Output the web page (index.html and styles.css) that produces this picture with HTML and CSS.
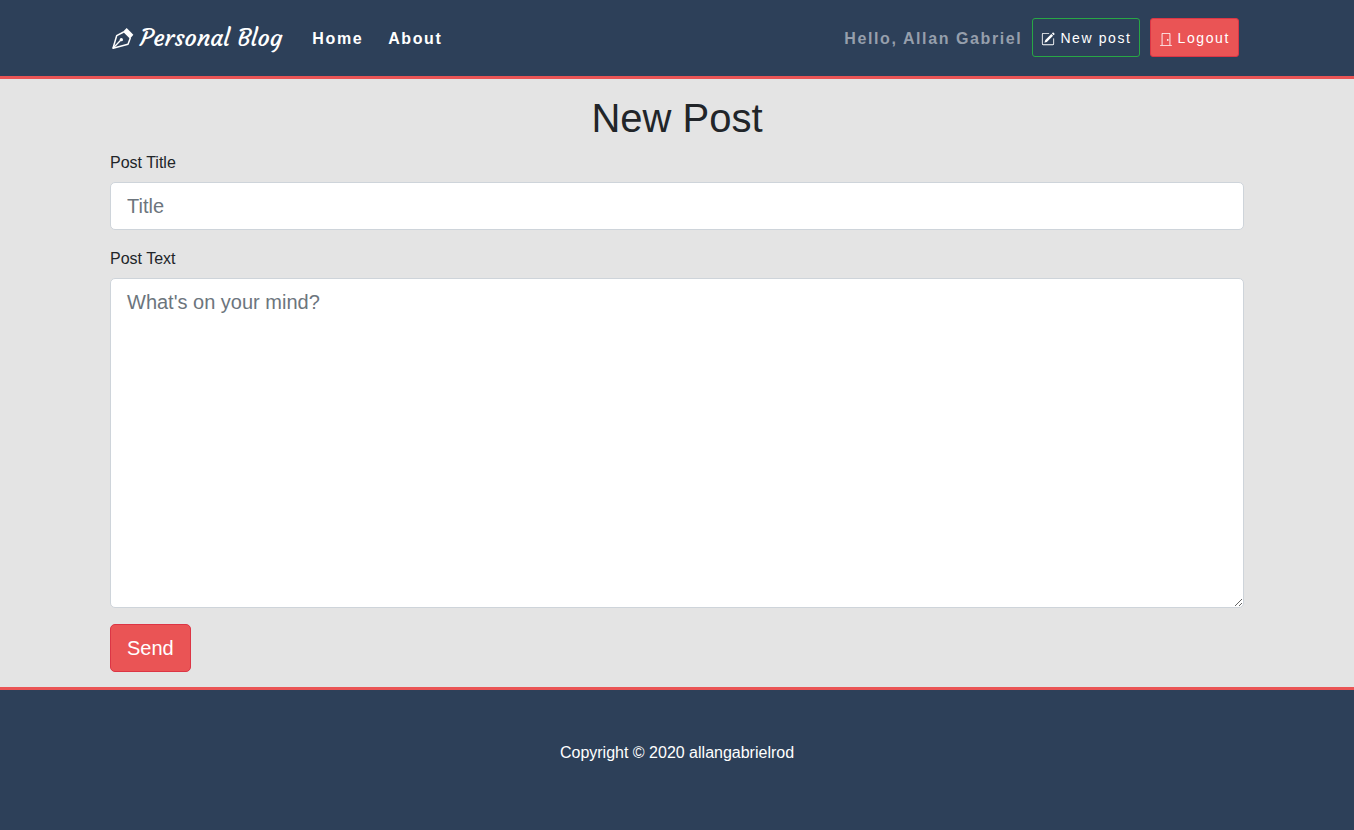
FILE: index.html
```html
<!DOCTYPE html>
<html lang="en">
<head>
<meta charset="utf-8">
<meta name="viewport" content="width=device-width, initial-scale=1">
<title>Personal Blog</title>
<link rel="stylesheet" href="styles.css">
</head>
<body>
<header class="site-header">
  <div class="container navbar">
    <a class="brand" href="#">
      <svg class="brand-icon" viewBox="-3 -4 72 72" aria-hidden="true">
        <path d="M38 14 17 25 6 63 51 51 58 32" fill="none" stroke="currentColor" stroke-width="4.5" stroke-linejoin="round"/>
        <path d="M47 2 67 22 57 34 36 13Z" fill="currentColor"/>
        <path d="M6 63 29 39" stroke="currentColor" stroke-width="4"/>
        <circle cx="31" cy="37" r="5" fill="currentColor"/>
      </svg>
      <span>Personal Blog</span>
    </a>
    <nav class="nav-links">
      <a href="#">Home</a>
      <a href="#">About</a>
    </nav>
    <div class="account">
      <span class="greeting">Hello, Allan Gabriel</span>
      <a class="btn btn-outline" href="#">
        <svg class="icon" viewBox="0 0 16 16" fill="currentColor" aria-hidden="true">
          <path d="M15.502 1.94a.5.5 0 0 1 0 .706L14.459 3.69l-2-2L13.502.646a.5.5 0 0 1 .707 0l1.293 1.293zm-1.75 2.456-2-2L4.939 9.21a.5.5 0 0 0-.121.196l-.805 2.414a.25.25 0 0 0 .316.316l2.414-.805a.5.5 0 0 0 .196-.12l6.813-6.814z"/>
          <path d="M1 13.5A1.5 1.5 0 0 0 2.5 15h11a1.5 1.5 0 0 0 1.5-1.5v-6a.5.5 0 0 0-1 0v6a.5.5 0 0 1-.5.5h-11a.5.5 0 0 1-.5-.5v-11a.5.5 0 0 1 .5-.5H9a.5.5 0 0 0 0-1H2.5A1.5 1.5 0 0 0 1 2.5v11z"/>
        </svg>
        New post
      </a>
      <a class="btn btn-danger" href="#">
        <svg class="icon" viewBox="0 0 16 16" fill="currentColor" aria-hidden="true">
          <path d="M3 2a1 1 0 0 1 1-1h8a1 1 0 0 1 1 1v13h-1V2H4v13H3z"/>
          <path d="M1.5 15h13a.5.5 0 0 1 0 1h-13a.5.5 0 0 1 0-1z"/>
          <circle cx="10" cy="9" r="1"/>
        </svg>
        Logout
      </a>
    </div>
  </div>
</header>
<main class="content">
  <div class="container">
    <h1>New Post</h1>
    <form>
      <div class="field">
        <label for="title">Post Title</label>
        <input class="control" type="text" id="title" placeholder="Title">
      </div>
      <div class="field">
        <label for="text">Post Text</label>
        <textarea class="control" id="text" rows="10" placeholder="What's on your mind?"></textarea>
      </div>
      <button class="btn-send" type="submit">Send</button>
    </form>
  </div>
</main>
<footer class="site-footer">
  <p>Copyright © 2020 allangabrielrod</p>
</footer>
</body>
</html>
```

FILE: styles.css
```css
*, *::before, *::after { box-sizing: border-box; }

body {
  margin: 0;
  min-height: 100vh;
  display: flex;
  flex-direction: column;
  font: 16px/24px "Liberation Sans", Arial, sans-serif;
  color: #212529;
  background: #e4e4e4;
}

.container {
  width: 100%;
  max-width: 1164px;
  margin: 0 auto;
  padding: 0 15px;
}

.site-header {
  background: #2d4059;
  border-bottom: 3px solid #ea5455;
}

.navbar {
  display: flex;
  flex-wrap: wrap;
  align-items: center;
  padding-top: 18px;
  padding-bottom: 19px;
  letter-spacing: 0.1em;
}

.brand {
  display: flex;
  align-items: center;
  gap: 6px;
  margin-right: 30px;
  color: #fff;
  font: 24px/36px Courgette, Lato, cursive;
  letter-spacing: normal;
  text-decoration: none;
}

.brand-icon { width: 24px; height: 24px; }

.nav-links { display: flex; gap: 25px; padding-top: 2px; }

.nav-links a {
  color: #fff;
  font-weight: 700;
  text-decoration: none;
}

.account {
  display: flex;
  align-items: center;
  gap: 10px;
  margin-left: auto;
  padding-right: 5px;
}

.greeting {
  padding-top: 2px;
  font-weight: 700;
  color: #969fac;
}

.btn {
  display: flex;
  align-items: center;
  gap: 5px;
  padding: 9px 7px 7px 8px;
  border: 1px solid;
  border-radius: 3px;
  color: #fff;
  font-size: 14px;
  line-height: 21px;
  text-decoration: none;
}

.btn-outline { border-color: #28a745; }

.btn-danger { padding-right: 8px; background: #ea5455; border-color: #dc3545; }

.icon { width: 14px; height: 14px; }

.content { flex: 1; padding: 15px 0; }

h1 {
  margin: 0 0 9px;
  font-size: 40px;
  line-height: 48px;
  font-weight: 500;
  text-align: center;
}

.field + .field { margin-top: 17px; }

.field label { display: block; margin-bottom: 7px; }

.control {
  display: block;
  width: 100%;
  padding: 8px 16px;
  border: 1px solid #ced4da;
  border-radius: 5px;
  background: #fff;
  color: #495057;
  font: 20px/30px "Liberation Sans", Arial, sans-serif;
}

.control::placeholder { color: #6c757d; opacity: 1; }

textarea.control { height: 330px; resize: vertical; }

.btn-send {
  display: block;
  margin-top: 16px;
  padding: 8px 16px;
  border: 1px solid #dc3545;
  border-radius: 5px;
  background: #ea5455;
  color: #fff;
  font: 20px/30px "Liberation Sans", Arial, sans-serif;
}

.site-footer {
  padding: 51px 15px 65px;
  border-top: 3px solid #ea5455;
  background: #2d4059;
  color: #fff;
  text-align: center;
}

.site-footer p { margin: 0; }
```
